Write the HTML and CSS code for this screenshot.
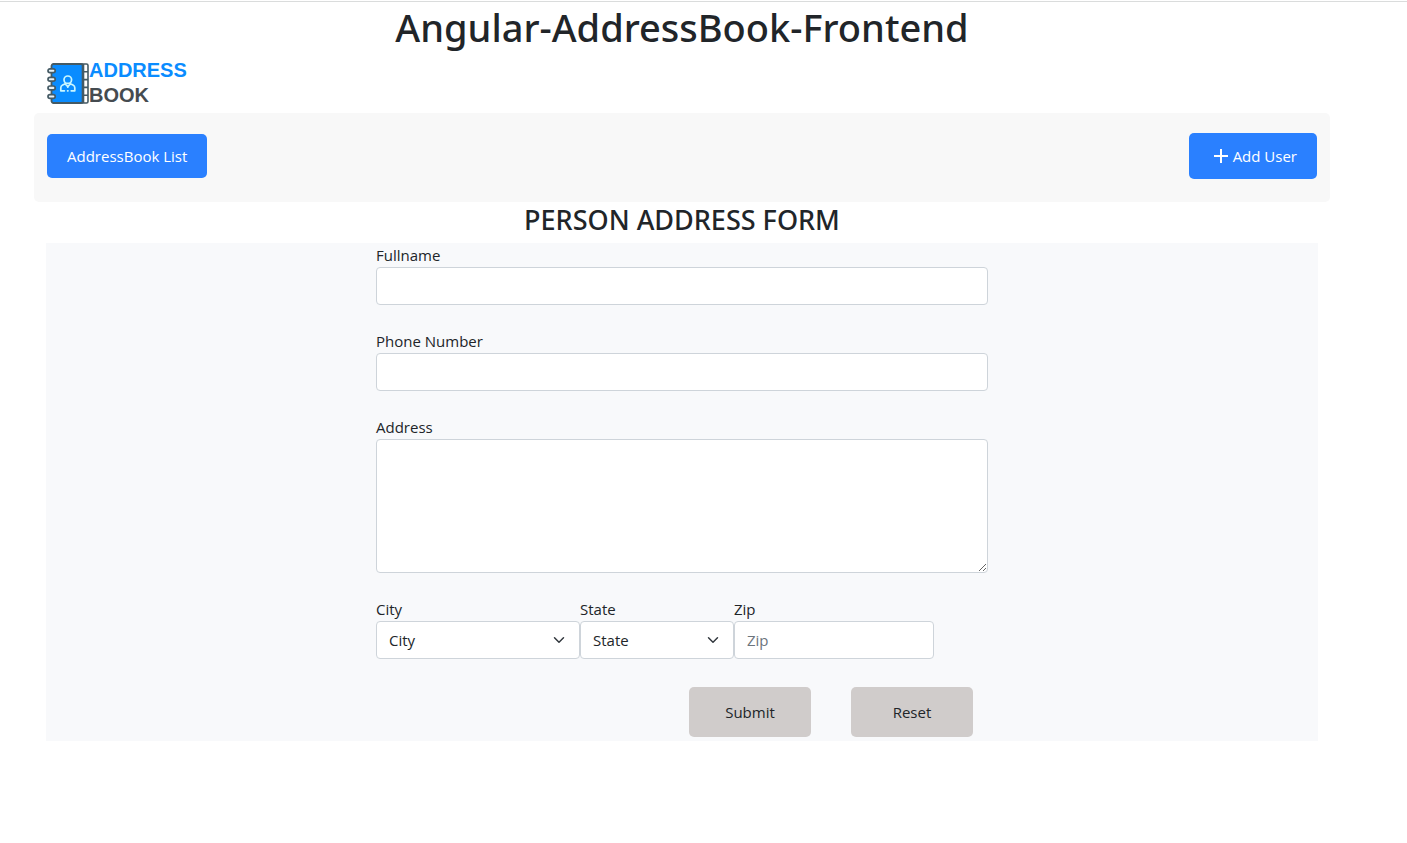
FILE: index.html
```html
<!DOCTYPE html>
<html lang="en">
<head>
<meta charset="utf-8">
<meta name="viewport" content="width=device-width, initial-scale=1">
<title>Angular-AddressBook-Frontend</title>
<link rel="stylesheet" href="styles.css">
</head>
<body>
<div class="page">
  <h1 class="title">Angular-AddressBook-Frontend</h1>
  <header class="brand">
    <svg class="brand-icon" viewBox="0 0 42 42" fill="none" aria-hidden="true">
      <path d="M35 2h4.500a1.500 1.500 0 0 1 1.500 1.500v36a1.500 1.500 0 0 1-1.500 1.500h-4.500z" fill="#fff" stroke="#455a64" stroke-width="1.600"/>
      <path d="M35 9.800h6M35 17.600h6M35 25.400h6M35 33.200h6" stroke="#455a64" stroke-width="1.600"/>
      <rect x="4.500" y="2" width="31.500" height="39" rx="2" fill="#0a8cff" stroke="#455a64" stroke-width="1.800"/>
      <path d="M36 2v39" stroke="#455a64" stroke-width="2.600"/>
      <g fill="#e9f2f7" stroke="#455a64" stroke-width="1.700">
        <rect x="1" y="6.800" width="7.200" height="3.800" rx="1.900"/>
        <rect x="1" y="15.400" width="7.200" height="3.800" rx="1.900"/>
        <rect x="1" y="24" width="7.200" height="3.800" rx="1.900"/>
        <rect x="1" y="32.600" width="7.200" height="3.800" rx="1.900"/>
      </g>
      <g stroke="#c9f6ff" stroke-width="1.700" stroke-linecap="round" stroke-linejoin="round">
        <path d="M17 17.800a3.800 3.800 0 1 1 7.600 0c0 1.500-.7 2.800-1.800 3.600h-4c-1.100-.8-1.800-2.100-1.800-3.600z"/>
        <path d="M18.800 21.400l-3.200 1.500c-1.300.6-1.800 1.700-1.800 2.900v3h3.600M22.800 21.400l3.200 1.500c1.300.6 1.800 1.700 1.800 2.900v3h-3.600M18.200 22l2.600 2.600 2.600-2.600M20.800 24.600v.6M20.600 28.800h.400"/>
      </g>
    </svg>
    <div class="brand-text"><span class="brand-top">ADDRESS</span><span>BOOK</span></div>
  </header>
  <nav class="toolbar">
    <button class="btn-primary" type="button">AddressBook List</button>
    <button class="btn-primary btn-add" type="button">
      <svg class="plus" viewBox="0 0 14 14" aria-hidden="true"><path d="M7 0v14M0 7h14" stroke="#fff" stroke-width="2"/></svg>
      Add User
    </button>
  </nav>
  <h2 class="subtitle">PERSON ADDRESS FORM</h2>
  <main class="panel">
    <form class="form">
      <div class="field">
        <label for="fullname">Fullname</label>
        <input class="control" id="fullname" type="text">
      </div>
      <div class="field">
        <label for="phone">Phone Number</label>
        <input class="control" id="phone" type="tel">
      </div>
      <div class="field">
        <label for="address">Address</label>
        <textarea class="control address" id="address"></textarea>
      </div>
      <div class="row">
        <div class="field city">
          <label for="city">City</label>
          <select class="control select" id="city"><option>City</option></select>
        </div>
        <div class="field state">
          <label for="state">State</label>
          <select class="control select" id="state"><option>State</option></select>
        </div>
        <div class="field zip">
          <label for="zip">Zip</label>
          <input class="control" id="zip" type="text" placeholder="Zip">
        </div>
      </div>
      <div class="actions">
        <button class="btn-form" type="submit">Submit</button>
        <button class="btn-form" type="reset">Reset</button>
      </div>
    </form>
  </main>
</div>
</body>
</html>
```
FILE: styles.css
```css
* { box-sizing: border-box; }

body {
  margin: 1px 0 0;
  border-top: 1px solid #dadcdc;
  background: #fff;
  color: #212529;
  font: 15px/24px "Segoe UI", "Open Sans", "Noto Sans", sans-serif;
}

.page { padding: 2px 77px 0 34px; }

h1, h2 {
  margin: 0;
  font-family: "Segoe UI", "Noto Sans", "Open Sans", sans-serif;
  font-weight: 500;
  text-align: center;
}

.title {
  font-size: 38px;
  line-height: 46px;
}

.brand {
  display: flex;
  align-items: center;
  padding: 8px 13px 5px;
}

.brand-icon { width: 42px; height: 42px; }

.brand-text {
  display: flex;
  flex-direction: column;
  color: #454b50;
  font: bold 20px/25px "Liberation Sans", Arial, sans-serif;
}

.brand-top { color: #0a8cff; }

.toolbar {
  display: flex;
  justify-content: space-between;
  align-items: center;
  padding: 20px 13px 23px;
  border-radius: 5px;
  background: #f8f8f8;
}

button, input, select, textarea { font: inherit; color: inherit; }

.btn-primary {
  height: 44px;
  padding: 0 20px;
  border: 0;
  border-radius: 5px;
  background: #2a80ff;
  color: #fff;
}

.btn-add {
  display: flex;
  align-items: center;
  gap: 5px;
  height: 46px;
  padding-left: 25px;
}

.plus { width: 14px; height: 14px; }

.subtitle {
  font-size: 27px;
  line-height: 36px;
  padding-bottom: 5px;
}

.panel {
  margin: 0 12px;
  padding-bottom: 4px;
  background: #f8f9fb;
}

.form {
  display: flex;
  flex-direction: column;
  gap: 24px;
  max-width: 612px;
  margin: 0 auto;
}

.field { display: flex; flex-direction: column; }

.control {
  width: 100%;
  height: 38px;
  padding: 6px 12px;
  border: 1px solid #ced4da;
  border-radius: 4px;
  background: #fff;
}

.control::placeholder { color: #6c757d; opacity: 1; }

.address { height: 134px; }

.select {
  appearance: none;
  background: #fff url("data:image/svg+xml,%3Csvg xmlns='http://www.w3.org/2000/svg' viewBox='0 0 16 16'%3E%3Cpath fill='none' stroke='%23343a40' stroke-linecap='round' stroke-linejoin='round' stroke-width='2' d='M2 5l6 6 6-6'/%3E%3C/svg%3E") no-repeat right 12px center / 16px 12px;
}

.row { display: flex; }

.city { flex: 0 1 204px; }
.state { flex: 0 1 154px; }
.zip { flex: 0 1 200px; }

.actions {
  display: flex;
  justify-content: flex-end;
  gap: 40px;
  padding: 4px 15px 0 0;
}

.btn-form {
  width: 122px;
  height: 50px;
  border: 0;
  border-radius: 5px;
  background: #d0cccb;
}
```
